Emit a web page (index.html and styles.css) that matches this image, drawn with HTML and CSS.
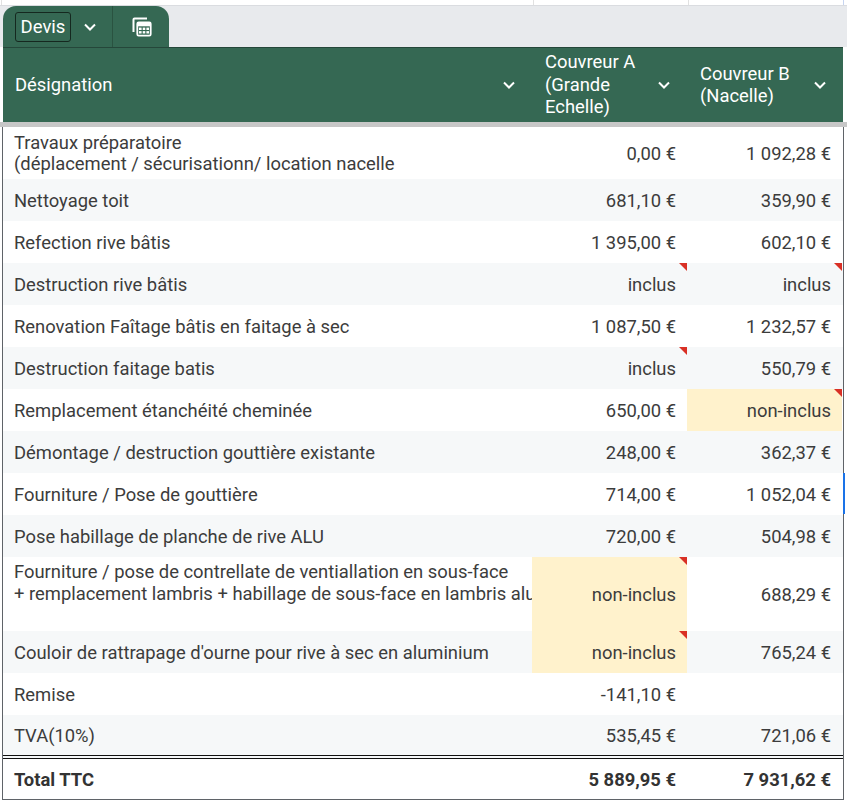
FILE: index.html
```html
<!DOCTYPE html>
<html lang="fr">
<head>
<meta charset="utf-8">
<title>Devis</title>
<link rel="stylesheet" href="styles.css">
</head>
<body>
<div class="top-strip">
  <div class="gcell g1"></div><div class="gcell g2"></div><div class="gcell g3"></div><div class="gcell g4"></div>
</div>
<div class="tabbar">
  <div class="tab">
    <div class="tab-name">Devis</div>
    <svg class="tab-chev" width="14" height="10" viewBox="0 0 14 10"><path d="M2 2.5 L7 7.5 L12 2.5" fill="none" stroke="#fff" stroke-width="2"/></svg>
    <div class="tab-sep"></div>
    <svg class="tab-icon" width="24" height="24" viewBox="0 0 24 24">
      <path d="M3.5 17 V4.5 a1 1 0 0 1 1-1 H17" fill="none" stroke="#fff" stroke-width="2"/>
      <rect x="7.3" y="7.3" width="13.4" height="13.4" rx="1.4" fill="none" stroke="#fff" stroke-width="1.8"/>
      <rect x="7.3" y="7.3" width="13.4" height="4" fill="#fff"/>
      <rect x="9" y="12.6" width="2.6" height="2.4" fill="#fff"/>
      <rect x="12.7" y="12.6" width="2.6" height="2.4" fill="#fff"/>
      <rect x="16.4" y="12.6" width="2.6" height="2.4" fill="#fff"/>
      <rect x="9" y="16.1" width="2.6" height="2.4" fill="#fff"/>
      <rect x="12.7" y="16.1" width="2.6" height="2.4" fill="#fff"/>
      <rect x="16.4" y="16.1" width="2.6" height="2.4" fill="#fff"/>
    </svg>
  </div>
</div>
<div class="head">
  <div class="hcell"><span class="htext">Désignation</span><svg class="chev" width="14" height="10" viewBox="0 0 14 10"><path d="M2 2.5 L7 7.5 L12 2.5" fill="none" stroke="#fff" stroke-width="2"/></svg></div>
  <div class="hcell"><span class="htext">Couvreur A<br>(Grande<br>Echelle)</span><svg class="chev" width="14" height="10" viewBox="0 0 14 10"><path d="M2 2.5 L7 7.5 L12 2.5" fill="none" stroke="#fff" stroke-width="2"/></svg></div>
  <div class="hcell"><span class="htext">Couvreur B<br>(Nacelle)</span><svg class="chev" width="14" height="10" viewBox="0 0 14 10"><path d="M2 2.5 L7 7.5 L12 2.5" fill="none" stroke="#fff" stroke-width="2"/></svg></div>
</div>
<div class="freeze"></div>
<div class="sheet">
  <div class="row h52">
    <div class="c desc"><span>Travaux préparatoire<br>(déplacement / sécurisationn/ location nacelle</span></div>
    <div class="c num">0,00 €</div>
    <div class="c num">1 092,28 €</div>
  </div>
  <div class="row band">
    <div class="c desc">Nettoyage toit</div>
    <div class="c num">681,10 €</div>
    <div class="c num">359,90 €</div>
  </div>
  <div class="row">
    <div class="c desc">Refection rive bâtis</div>
    <div class="c num">1 395,00 €</div>
    <div class="c num">602,10 €</div>
  </div>
  <div class="row band">
    <div class="c desc">Destruction rive bâtis</div>
    <div class="c num note">inclus</div>
    <div class="c num note">inclus</div>
  </div>
  <div class="row">
    <div class="c desc">Renovation Faîtage bâtis en faitage à sec</div>
    <div class="c num">1 087,50 €</div>
    <div class="c num">1 232,57 €</div>
  </div>
  <div class="row band">
    <div class="c desc">Destruction faitage batis</div>
    <div class="c num note">inclus</div>
    <div class="c num">550,79 €</div>
  </div>
  <div class="row">
    <div class="c desc">Remplacement étanchéité cheminée</div>
    <div class="c num">650,00 €</div>
    <div class="c num note yellow">non-inclus</div>
  </div>
  <div class="row band">
    <div class="c desc">Démontage / destruction gouttière existante</div>
    <div class="c num">248,00 €</div>
    <div class="c num">362,37 €</div>
  </div>
  <div class="row sel">
    <div class="c desc">Fourniture / Pose de gouttière</div>
    <div class="c num">714,00 €</div>
    <div class="c num">1 052,04 €</div>
  </div>
  <div class="row band">
    <div class="c desc">Pose habillage de planche de rive ALU</div>
    <div class="c num">720,00 €</div>
    <div class="c num">504,98 €</div>
  </div>
  <div class="row h74">
    <div class="c desc clip"><span class="l22">Fourniture / pose de contrellate de ventiallation en sous-face<br>+ remplacement lambris + habillage de sous-face en lambris alu<br>&nbsp;</span></div>
    <div class="c num note yellow">non-inclus</div>
    <div class="c num">688,29 €</div>
  </div>
  <div class="row band">
    <div class="c desc">Couloir de rattrapage d'ourne pour rive à sec en aluminium</div>
    <div class="c num note yellow">non-inclus</div>
    <div class="c num">765,24 €</div>
  </div>
  <div class="row">
    <div class="c desc">Remise</div>
    <div class="c num">-141,10 €</div>
    <div class="c num"></div>
  </div>
  <div class="row band tva">
    <div class="c desc">TVA(10%)</div>
    <div class="c num">535,45 €</div>
    <div class="c num">721,06 €</div>
  </div>
  <div class="row total">
    <div class="c desc">Total TTC</div>
    <div class="c num">5 889,95 €</div>
    <div class="c num">7 931,62 €</div>
  </div>
</div>
</body>
</html>
```
FILE: styles.css
```css
* { box-sizing: border-box; }
html, body { margin: 0; padding: 0; background: #fff; }
body {
  font-family: Roboto, "Liberation Sans", Arial, sans-serif;
  color: #3c3c3c;
  width: 847px;
  overflow: hidden;
}
.top-strip {
  display: flex;
  height: 6px;
  border-bottom: 1px solid #dadce0;
}
.gcell { height: 5px; border-left: 1px solid #e1e1e1; }
.g1 { width: 532px; margin-left: 1px; }
.g2 { width: 155px; }
.g3 { width: 155px; }
.g4 { flex: 1; border-left: 1px solid #c6d4f0; }

.tabbar {
  height: 41px;
  background: #e8eaed;
  display: flex;
  align-items: flex-end;
  padding-left: 3px;
}
.tab {
  width: 166px;
  height: 41px;
  background: #356853;
  border-radius: 13px 13px 0 0;
  display: flex;
  align-items: center;
}
.tab-name {
  margin-left: 12px;
  height: 30px;
  width: 56px;
  border: 1px solid #15281f;
  border-radius: 3px;
  color: #fff;
  font-size: 18.5px;
  line-height: 28px;
  text-align: center;
}
.tab-chev { margin-left: 12px; }
.tab-sep { width: 1px; height: 41px; background: #2a5341; margin-left: 15px; }
.tab-icon { margin-left: 17px; }

.head {
  margin-left: 3px;
  width: 840px;
  height: 75px;
  background: #356853;
  border-top: 1px solid #25473a;
  display: grid;
  grid-template-columns: 529px 155px 156px;
  color: #fff;
  font-size: 18.4px;
}
.hcell {
  display: flex;
  align-items: center;
  justify-content: space-between;
  padding: 0 16px 0 12px;
  line-height: 22.5px;
}
.hcell:nth-child(2), .hcell:nth-child(3) { padding-left: 13px; }
.chev { flex: none; }

.freeze { height: 5px; background: #c7c7c7; }

.sheet {
  margin-left: 2px;
  width: 842px;
  border-left: 1px solid #5f6368;
  border-right: 1px solid #5f6368;
  border-bottom: 1px solid #5f6368;
}
.row {
  display: grid;
  grid-template-columns: 529px 155px 155px;
  height: 42px;
  font-size: 18.4px;
  position: relative;
}
.row.band { background: #f6f8f9; }
.row.h52 { height: 52px; }
.row.h74 { height: 74px; }
.c {
  display: flex;
  align-items: center;
  position: relative;
  line-height: 21px;
  white-space: nowrap;
  overflow: hidden;
}
.l22 { line-height: 22px; }
.desc { padding-left: 11px; }
.num { justify-content: flex-end; padding-right: 11px; }
.yellow { background: #fff2cc; }
.note::after {
  content: "";
  position: absolute;
  top: 0;
  right: 0;
  border-style: solid;
  border-width: 0 8px 8px 0;
  border-color: transparent #d93025 transparent transparent;
}
.row.tva { height: 44px; border-bottom: 4px double #111; }
.row.total { height: 40px; font-weight: 700; color: #333; }
.row.sel::after {
  content: "";
  position: absolute;
  left: 840px;
  top: 0;
  width: 2px;
  height: 41px;
  background: #1a73e8;
}
```
